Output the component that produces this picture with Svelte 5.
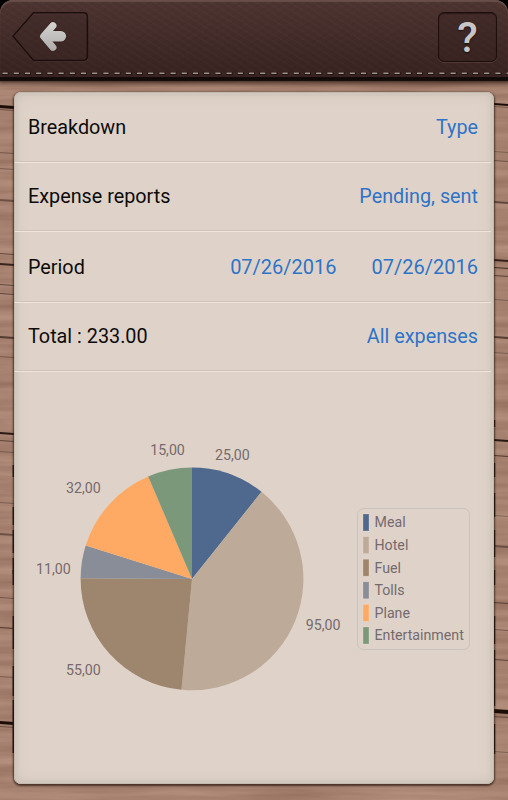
<!--
  Expense breakdown screen
  Filter rows on top, pie chart with legend underneath
-->
<script>
  const slices = [
    { label: 'Meal', value: 25, color: '#4f698e', x: 232.3, y: 459.7 },
    { label: 'Hotel', value: 95, color: '#bdaa98', x: 323.2, y: 630.2 },
    { label: 'Fuel', value: 55, color: '#9d856e', x: 83.3, y: 674.8 },
    { label: 'Tolls', value: 11, color: '#888d98', x: 53.3, y: 573.6 },
    { label: 'Plane', value: 32, color: '#ffaa64', x: 83.3, y: 493.2 },
    { label: 'Entertainment', value: 15, color: '#7b987b', x: 167.5, y: 455.1 },
  ];

  const cx = 192;
  const cy = 578.9;
  const radius = 111.4;
  const total = slices.reduce((sum, s) => sum + s.value, 0);

  const rows = [
    { label: 'Breakdown', values: ['Type'], height: 71 },
    { label: 'Expense reports', values: ['Pending, sent'], height: 69 },
    { label: 'Period', values: ['07/26/2016', '07/26/2016'], height: 71, dates: true },
    { label: `Total : ${total.toFixed(2)}`, values: ['All expenses'], height: 69 },
  ];

  function point(value) {
    const a = (value / total) * Math.PI * 2;
    return `${cx + radius * Math.sin(a)} ${cy - radius * Math.cos(a)}`;
  }

  let start = 0;
  const paths = slices.map((s) => {
    const from = start;
    start += s.value;
    const large = s.value > total / 2 ? 1 : 0;
    return `M${cx} ${cy}L${point(from)}A${radius} ${radius} 0 ${large} 1 ${point(start)}Z`;
  });

  const format = (value) => value.toFixed(2).replace('.', ',');

  // gaps between the planks: y, thickness, opacity
  const leftGaps = [
    [105, 3, 1], [109, 1, 0.4], [152, 1, 0.3], [168, 1, 0.3], [199, 2, 0.4], [253, 1, 0.5],
    [263, 2, 0.8], [284, 1, 0.5], [293, 1, 0.5], [336, 2, 0.6], [356, 1, 0.3], [432, 2, 0.9],
    [440, 1, 0.5], [451, 1, 0.3], [502, 1, 0.3], [533, 2, 0.4], [597, 1, 0.4], [627, 1, 0.6],
    [676, 1, 0.3], [721, 3, 1], [726, 1, 0.4],
  ];
  const rightGaps = [
    [103, 2, 1], [106, 1, 0.4], [151, 1, 0.3], [160, 1, 0.4], [201, 2, 0.5], [259, 2, 0.8],
    [267, 1, 0.7], [275, 1, 0.5], [299, 1, 0.3], [336, 2, 0.6], [352, 1, 0.3], [439, 2, 0.9],
    [455, 1, 0.6], [515, 1, 0.3], [545, 2, 0.4], [602, 1, 0.5], [629, 1, 0.4], [659, 1, 0.5],
    [709, 4, 1], [716, 1, 0.4], [751, 1, 0.3],
  ];
  const leftNotches = [[465, 12], [507, 18], [530, 23], [558, 16], [570, 15], [616, 33], [666, 30], [700, 53]];
  const rightNotches = [[420, 7], [463, 14], [493, 24], [530, 27], [570, 15], [616, 28], [650, 56], [724, 30]];
</script>

<div class="screen">
  <svg class="wood" viewBox="0 0 508 800" aria-hidden="true">
    <defs>
      <filter id="grain" x="0" y="0" width="100%" height="100%" color-interpolation-filters="sRGB">
        <feTurbulence type="fractalNoise" baseFrequency="0.006 0.09" numOctaves="4" seed="8" />
        <feColorMatrix
          values="0.19 0 0 0 0.555  0.2 0 0 0 0.405  0.19 0 0 0 0.34  0 0 0 0 1"
        />
      </filter>
    </defs>
    <rect width="508" height="800" filter="url(#grain)" />
    {#each leftGaps as [y, h, o]}
      <path d={`M0 ${y}L14 ${y + 1}V${y + h + 1}L0 ${y + h}Z`} fill="#1c0d09" opacity={o} />
    {/each}
    {#each rightGaps as [y, h, o]}
      <path d={`M494 ${y}L508 ${y + 1}V${y + h + 1}L494 ${y + h}Z`} fill="#1c0d09" opacity={o} />
    {/each}
    <g fill="#17110f">
      {#each leftNotches as [y, h]}
        <rect x="12.6" {y} width="3" height={h} />
      {/each}
      {#each rightNotches as [y, h]}
        <rect x="493" {y} width="2.2" height={h} />
      {/each}
    </g>
  </svg>

  <header class="topbar">
    <button class="nav-btn" aria-label="Back">
      <svg width="78" height="52" viewBox="11 11 78 52">
        <defs>
          <linearGradient id="metal" gradientUnits="userSpaceOnUse" x1="0" y1="22" x2="0" y2="51">
            <stop offset="0" stop-color="#d6d4d2" />
            <stop offset="1" stop-color="#aeacaa" />
          </linearGradient>
        </defs>
        <path
          d="M33.5 12.8H83Q87.4 12.8 87.4 17.2V56Q87.4 60.4 83 60.4H33.5L13 36.2Z"
          fill="#3a2422"
          fill-opacity=".35"
          stroke="#6a4e49"
          stroke-opacity=".45"
          transform="translate(0 1)"
        />
        <path
          d="M33.5 12.8H83Q87.4 12.8 87.4 17.2V56Q87.4 60.4 83 60.4H33.5L13 36.2Z"
          fill="none"
          stroke="#1b0e0d"
          stroke-width="1.5"
        />
        <g class="arrow-shadow">
          <path d="M53 25.6L44 36.4L53 47.6" stroke-width="8" />
          <path d="M47 36.4H60.5" stroke-width="12.4" />
        </g>
        <g class="arrow">
          <path d="M53 25.6L43.6 36.3L53 47.4" stroke-width="7" />
          <path class="shaft" d="M48 36.2H60.8" stroke-width="10.6" />
        </g>
      </svg>
    </button>
    <button class="nav-btn help" aria-label="Help"><span>?</span></button>
    <svg class="stitches" viewBox="0 0 508 4" aria-hidden="true">
      <path d="M2 1.4H508" stroke="#1f100e" stroke-width="2.6" stroke-dasharray="6.6 4.6" />
      <path d="M2.5 1.3H508" stroke="#a0958f" stroke-width="1.4" stroke-dasharray="5.2 6" />
    </svg>
  </header>

  <main class="panel">
    {#each rows as row}
      <div class="row" class:dates={row.dates} style:height="{row.height}px">
        <span class="label">{row.label}</span>
        <span class="values">
          {#each row.values as value}
            <span>{value}</span>
          {/each}
        </span>
      </div>
    {/each}

    <svg class="chart" width="480" height="412" viewBox="14 372 480 412">
      {#each slices as slice, i}
        <path d={paths[i]} fill={slice.color} />
      {/each}
      {#each slices as slice}
        <text x={slice.x} y={slice.y} text-anchor="middle">{format(slice.value)}</text>
      {/each}

      <rect class="legend" x="357.5" y="508.5" width="112" height="141" rx="6" />
      {#each slices as slice, i}
        <rect
          x="363"
          y={514 + i * 22.6}
          width="6"
          height="17"
          fill={slice.color}
          stroke="#f5e8d8"
          stroke-opacity=".35"
          stroke-width=".8"
        />
        <text x="374.5" y={527.3 + i * 22.6}>{slice.label}</text>
      {/each}
    </svg>
  </main>
</div>

<style>
  :global(body) {
    background: #000;
  }

  .screen {
    position: relative;
    width: 508px;
    height: 800px;
    overflow: hidden;
    font-family: Roboto, 'Liberation Sans', sans-serif;
  }

  .wood {
    position: absolute;
    inset: 0;
    z-index: -1;
    width: 508px;
    height: 800px;
  }

  .topbar {
    display: flex;
    flex-wrap: wrap;
    justify-content: space-between;
    box-sizing: border-box;
    height: 77px;
    padding: 11px 11px 0;
    border-radius: 13px 13px 0 0;
    background:
      repeating-linear-gradient(32deg, rgba(255, 220, 210, 0.015) 0 2px, transparent 2px 6px),
      repeating-linear-gradient(-32deg, rgba(0, 0, 0, 0.03) 0 2px, transparent 2px 6px),
      linear-gradient(#4d3431, #432c29 45%, #372220);
    box-shadow:
      inset 0 2px 1px #684d49,
      0 -14px 0 14px #000,
      0 3px 1px 1px #120b09,
      0 4px 5px 2px rgba(25, 10, 5, 0.7);
    clip-path: inset(0 0 -10px 0);
  }

  .screen::before {
    content: '';
    position: absolute;
    top: 0;
    left: 0;
    z-index: -1;
    width: 100%;
    height: 20px;
    background: #000;
  }

  .nav-btn {
    height: 52px;
    padding: 0;
    border: 0;
    background: none;
    color: inherit;
    font: inherit;
  }

  .nav-btn svg {
    display: block;
  }

  .arrow,
  .arrow-shadow {
    fill: none;
    stroke: url(#metal);
    stroke-linecap: round;
    stroke-linejoin: round;
  }

  .arrow-shadow {
    stroke: #2a1716;
    opacity: 0.55;
  }

  .help {
    box-sizing: border-box;
    width: 59px;
    height: 50px;
    margin-top: 1px;
    border: 1.5px solid #1b0e0d;
    border-radius: 6px;
    background: rgba(50, 30, 28, 0.3);
    box-shadow:
      inset 0 1px 1px rgba(20, 8, 8, 0.5),
      0 1px 0 rgba(120, 90, 85, 0.35);
  }

  .help span {
    display: block;
    color: #c8c6c4;
    font-size: 42px;
    font-weight: 500;
    line-height: 49px;
    text-shadow: 0 1px 2px #1d0f0e;
  }

  .stitches {
    width: 508px;
    height: 4px;
    margin: 7px -11px 0;
  }

  .panel {
    box-sizing: border-box;
    width: 480px;
    height: 692px;
    margin: 15px 14px 0;
    overflow: hidden;
    border-radius: 7px;
    background: #dfd3c9;
    box-shadow:
      inset 0 0 0 1px #c3b9ae,
      inset 0 0 0 4px rgba(205, 197, 186, 0.45),
      inset 0 0 14px rgba(170, 155, 140, 0.4),
      0 1px 2px 1px rgba(45, 25, 18, 0.75);
  }

  .row {
    display: flex;
    align-items: center;
    justify-content: space-between;
    box-sizing: border-box;
    margin: 0 3px 0 1px;
    padding: 0 13px;
    border-bottom: 1px solid #f0e5da;
    box-shadow: inset 0 -1px 0 #cfc2b7;
    font-size: 19.8px;
    line-height: 24px;
  }

  .row:nth-child(odd) {
    padding-top: 2px;
  }

  .label {
    color: #0d0b0a;
  }

  .values {
    display: flex;
    gap: 35px;
    color: #2e73c8;
  }

  .dates .values {
    margin-top: -2px;
    font-size: 20px;
  }

  .chart {
    display: block;
  }

  .chart text {
    fill: #756a6d;
    font-size: 14.2px;
  }

  .legend {
    fill: none;
    stroke: #c9c3bf;
  }
</style>
